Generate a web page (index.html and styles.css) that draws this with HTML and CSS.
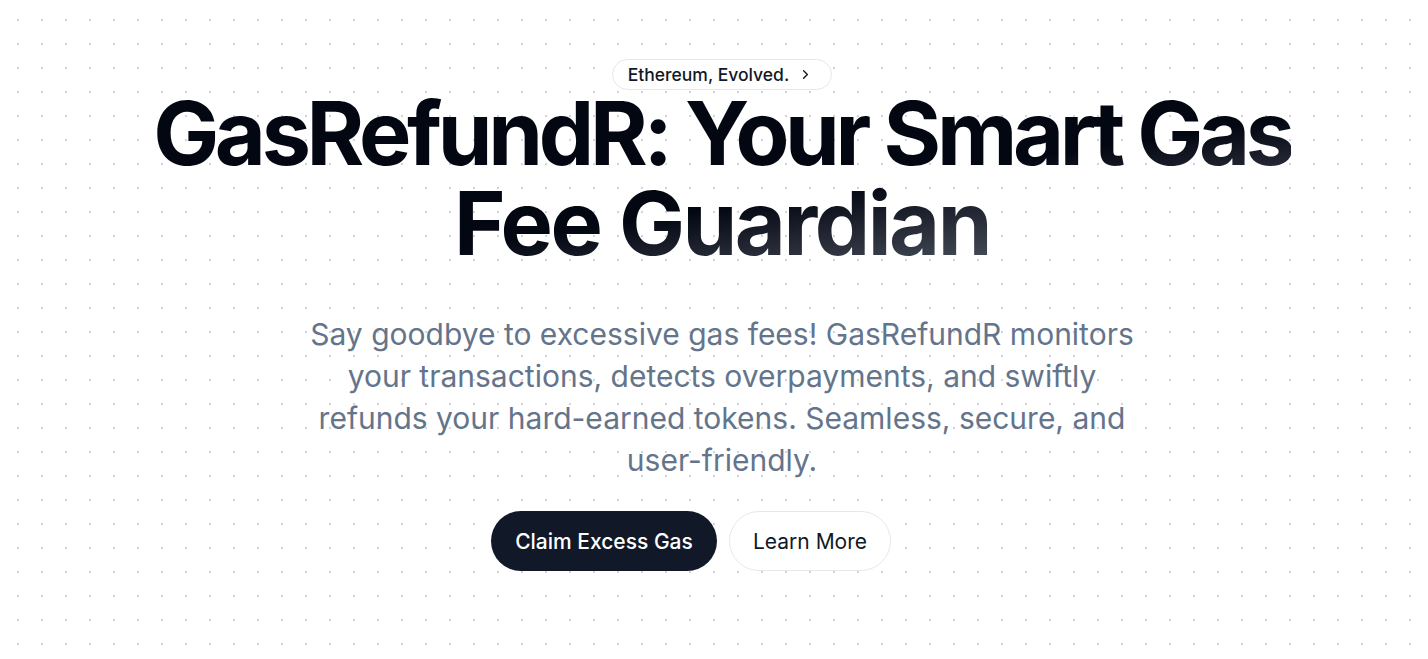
FILE: index.html
```html
<!DOCTYPE html>
<html lang="en">
<head>
<meta charset="utf-8">
<title>GasRefundR</title>
<link rel="stylesheet" href="styles.css">
</head>
<body>
<main class="hero">
  <a class="badge" href="#">
    <span>Ethereum, Evolved.</span>
    <svg class="chev" width="15" height="15" viewBox="0 0 24 24" fill="none" stroke="currentColor" stroke-width="2.2" stroke-linecap="round" stroke-linejoin="round"><path d="M9 6l6 6-6 6"/></svg>
  </a>
  <h1 class="title"><span class="title-line1">GasRefundR: Your Smart Gas</span><br><span class="title-line2">Fee Guardian</span></h1>
  <p class="lead">Say goodbye to excessive gas fees! GasRefundR monitors your transactions, detects overpayments, and swiftly refunds your hard-earned tokens. Seamless, secure, and user-friendly.</p>
  <div class="actions">
    <a class="btn btn-primary" href="#">Claim Excess Gas</a>
    <a class="btn btn-outline" href="#">Learn More</a>
  </div>
</main>
</body>
</html>
```
FILE: styles.css
```css
html, body {
  margin: 0;
  padding: 0;
}
body {
  min-height: 100vh;
  background-color: #ffffff;
  background-image: radial-gradient(circle, #d3d4e0 1px, transparent 1.6px);
  background-size: 24px 24px;
  background-position: 6px 8px;
  font-family: "Inter", "Liberation Sans", sans-serif;
  color: #030712;
  overflow: hidden;
}
.hero {
  display: flex;
  flex-direction: column;
  align-items: center;
  padding: 59px 0 0 16px;
  text-align: center;
}
.badge {
  display: inline-flex;
  align-items: center;
  gap: 9px;
  height: 31px;
  box-sizing: border-box;
  padding: 0 18px 0 15px;
  border: 1px solid #e5e7eb;
  border-radius: 999px;
  background: #ffffff;
  color: #111827;
  font-size: 17.5px;
  font-weight: 500;
  text-decoration: none;
}
.chev {
  display: block;
}
.title {
  margin: -2px 0 0;
  font-size: 88px;
  line-height: 90px;
  font-weight: 700;
  letter-spacing: -0.047em;
  background-image: linear-gradient(to bottom right, #030712 0%, #030712 58%, #6b7280 100%);
  -webkit-background-clip: text;
  background-clip: text;
  color: transparent;
}
.title-line1 {
  letter-spacing: -0.049em;
}
.title-line2 {
  letter-spacing: -0.028em;
}
.lead {
  margin: 45px 0 0;
  max-width: 832px;
  font-size: 30px;
  line-height: 42px;
  color: #64748b;
  font-weight: 400;
}
.actions {
  display: flex;
  gap: 12px;
  margin-top: 30px;
  padding-right: 62px;
}
.btn {
  display: inline-flex;
  align-items: center;
  justify-content: center;
  height: 60px;
  box-sizing: border-box;
  border-radius: 999px;
  font-size: 21px;
  text-decoration: none;
}
.btn-primary {
  width: 226px;
  background: #111827;
  color: #ffffff;
  font-weight: 500;
}
.btn-outline {
  width: 162px;
  background: #ffffff;
  border: 1px solid #e5e7eb;
  color: #111827;
  font-weight: 400;
}
```
